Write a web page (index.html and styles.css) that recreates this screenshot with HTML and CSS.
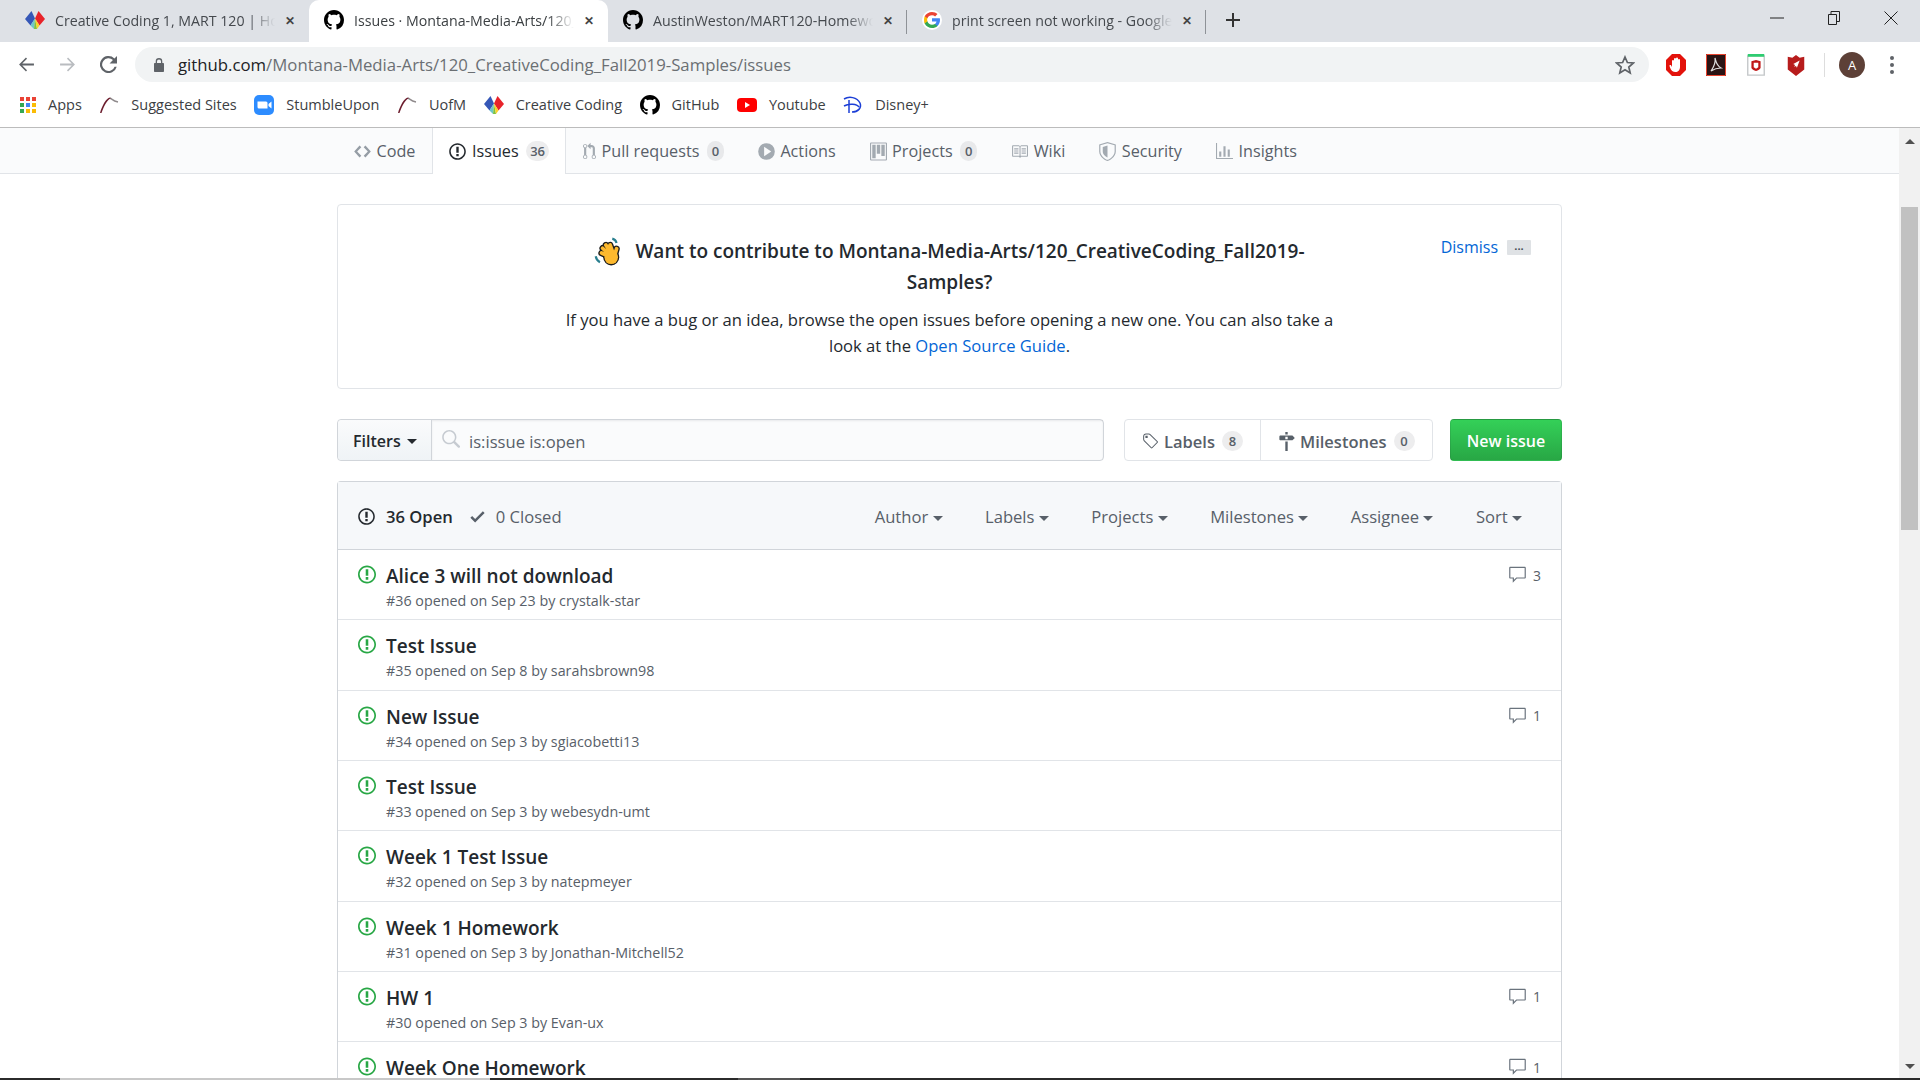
FILE: index.html
```html
<!DOCTYPE html>
<html lang="en">
<head>
<meta charset="UTF-8">
<title>Issues · Montana-Media-Arts/120_CreativeCoding_Fall2019-Samples</title>
<link rel="stylesheet" href="styles.css">
</head>
<body>

<svg class="sprite" xmlns="http://www.w3.org/2000/svg">
  <symbol id="i-issue" viewBox="0 0 14 16"><path d="M7 2.3c3.14 0 5.7 2.56 5.7 5.7s-2.56 5.7-5.7 5.7A5.71 5.71 0 0 1 1.3 8c0-3.14 2.56-5.7 5.7-5.7zM7 1C3.14 1 0 4.14 0 8s3.14 7 7 7 7-3.14 7-7-3.14-7-7-7zm1 3H6v5h2V4zm0 6H6v2h2v-2z"/></symbol>
  <symbol id="i-code" viewBox="0 0 14 16"><path d="M9.5 3L8 4.500 11.500 8 8 11.500 9.500 13 14 8 9.500 3zm-5 0L0 8l4.500 5L6 11.500 2.500 8 6 4.500 4.500 3z"/></symbol>
  <symbol id="i-pull" viewBox="0 0 12 16"><path d="M11 11.28V5c-.03-.78-.34-1.47-.94-2.06C9.46 2.35 8.78 2.03 8 2H7V0L4 3l3 3V4h1c.27.02.48.11.69.31.21.2.3.42.31.69v6.28A1.993 1.993 0 0 0 10 15a1.993 1.993 0 0 0 1-3.72zm-1 2.92c-.66 0-1.2-.55-1.2-1.2 0-.65.55-1.2 1.2-1.2.65 0 1.2.55 1.2 1.2 0 .65-.55 1.2-1.2 1.2zM4 3c0-1.11-.89-2-2-2a1.993 1.993 0 0 0-1 3.72v6.56A1.993 1.993 0 0 0 2 15a1.993 1.993 0 0 0 1-3.72V4.72c.59-.34 1-.98 1-1.72zm-.8 10c0 .66-.55 1.2-1.2 1.2-.65 0-1.2-.55-1.2-1.2 0-.65.55-1.2 1.2-1.2.65 0 1.2.55 1.2 1.2zM2 4.200C1.34 4.200.8 3.650.8 3c0-.65.55-1.2 1.2-1.2.65 0 1.2.55 1.2 1.2 0 .65-.55 1.2-1.2 1.2z"/></symbol>
  <symbol id="i-play" viewBox="0 0 14 16"><path d="M14 8A7 7 0 1 1 0 8a7 7 0 0 1 14 0zM5 12l6-4-6-4v8z"/></symbol>
  <symbol id="i-project" viewBox="0 0 15 16"><path fill-rule="evenodd" d="M10 12h3V2h-3v10zm-4-2h3V2H6v8zm-4 4h3V2H2v12zm-1 1h13V1H1v14zM14 0H1a1 1 0 0 0-1 1v14a1 1 0 0 0 1 1h13a1 1 0 0 0 1-1V1a1 1 0 0 0-1-1z"/></symbol>
  <symbol id="i-book" viewBox="0 0 16 16"><path d="M3 5h4v1H3V5zm0 3h4V7H3v1zm0 2h4V9H3v1zm11-5h-4v1h4V5zm0 2h-4v1h4V7zm0 2h-4v1h4V9zm2-6v9c0 .55-.45 1-1 1H9.500l-1 1-1-1H2c-.55 0-1-.45-1-1V3c0-.55.45-1 1-1h5.500l1 1 1-1H15c.55 0 1 .45 1 1zm-8 .5L7.500 3H2v9h6V3.500zm7-.5H9.500l-.5.5V12h6V3z"/></symbol>
  <symbol id="i-shield" viewBox="0 0 14 16"><path fill-rule="evenodd" d="M0 2l7-2 7 2v6.020C14 12.690 8.310 16 7 16c-1.310 0-7-3.310-7-7.980V2zm1 .75v5.270C1 12 6 15 7 15s6-3 6-6.980V2.750L7 1 1 2.750zM7 3L3 4.200v3.800C3 10.800 6 12.600 7 13V3z"/></symbol>
  <symbol id="i-graph" viewBox="0 0 16 16"><path d="M16 14v1H0V0h1v14h15zM5 13H3V8h2v5zm4 0H7V3h2v10zm4 0h-2V6h2v7z"/></symbol>
  <symbol id="i-tag" viewBox="0 0 15 16"><path d="M7.730 1.730C7.260 1.260 6.620 1 5.960 1H3.500C2.130 1 1 2.130 1 3.500v2.470c0 .66.27 1.300.73 1.770l6.060 6.060c.39.39 1.020.39 1.410 0l4.590-4.590a.996.996 0 0 0 0-1.410L7.730 1.730zM2.380 7.090c-.31-.3-.47-.7-.47-1.130V3.500c0-.88.72-1.590 1.590-1.590h2.470c.42 0 .83.16 1.130.47l6.140 6.130-4.730 4.730-6.130-6.150zM3.010 3h2v2H3V3h.01z"/></symbol>
  <symbol id="i-milestone" viewBox="0 0 14 16"><path d="M8 2H6V0h2v2zm4 5H2c-.55 0-1-.45-1-1V4c0-.55.45-1 1-1h10l2 2-2 2zM8 4H6v2h2V4zM6 16h2V8H6v8z"/></symbol>
  <symbol id="i-check" viewBox="0 0 12 16"><path d="M12 5l-8 8-4-4 1.500-1.500L4 10l6.500-6.500L12 5z"/></symbol>
  <symbol id="i-comment" viewBox="0 0 16 16"><path d="M14 1H2c-.55 0-1 .45-1 1v8c0 .55.45 1 1 1h2v3.500L7.500 11H14c.55 0 1-.45 1-1V2c0-.55-.45-1-1-1zm0 9H7l-2 2v-2H2V2h12v8z"/></symbol>
  <symbol id="i-search" viewBox="0 0 16 16"><path d="M15.700 13.300l-3.810-3.830A5.930 5.930 0 0 0 13 6c0-3.310-2.690-6-6-6S1 2.690 1 6s2.690 6 6 6c1.300 0 2.480-.41 3.470-1.110l3.830 3.810c.19.2.45.3.7.3.25 0 .52-.09.7-.3a.996.996 0 0 0 0-1.410v.01zM7 10.700c-2.590 0-4.700-2.110-4.700-4.700 0-2.590 2.110-4.700 4.700-4.700 2.590 0 4.700 2.110 4.700 4.700 0 2.590-2.110 4.700-4.700 4.700z"/></symbol>
  <symbol id="i-github" viewBox="0 0 16 16"><path d="M8 0C3.580 0 0 3.580 0 8c0 3.540 2.290 6.530 5.470 7.590.4.07.55-.17.55-.38 0-.19-.01-.82-.01-1.490-2.010.37-2.530-.49-2.690-.94-.09-.23-.48-.94-.82-1.130-.28-.15-.68-.52-.01-.53.63-.01 1.080.58 1.230.82.72 1.210 1.870.87 2.330.66.07-.52.28-.87.51-1.070-1.780-.2-3.640-.89-3.640-3.950 0-.87.31-1.590.82-2.150-.08-.2-.36-1.020.08-2.120 0 0 .67-.21 2.200.82.64-.18 1.320-.27 2-.27.68 0 1.360.09 2 .27 1.530-1.040 2.200-.82 2.200-.82.44 1.100.16 1.920.08 2.120.51.56.82 1.270.82 2.150 0 3.070-1.870 3.750-3.650 3.950.29.25.54.73.54 1.480 0 1.070-.01 1.930-.01 2.200 0 .21.15.46.55.38A8.013 8.013 0 0 0 16 8c0-4.420-3.580-8-8-8z"/></symbol>
  <symbol id="i-diamonds" viewBox="0 0 20 20">
    <path fill="#3557b7" d="M6.500 1L0 9l5.500 6.500L10 8.500z"/>
    <path fill="#e8232a" d="M13.500 1L20 9l-5.500 6.500L10 8.500z"/>
    <path fill="#6fc7c9" d="M10 8.500L5.500 15.500 9 19z"/>
    <path fill="#7cc242" d="M10 8.500L9 19h3z"/>
    <path fill="#fbd428" d="M10 8.500L14.500 15.500 12 19z"/>
  </symbol>
  <symbol id="i-peak" viewBox="0 0 20 20">
    <path fill="none" stroke="#8f8a8c" stroke-width="1.400" d="M11 3c2 1 3 3 8 4"/>
    <path fill="#6d1f2f" d="M1 18C3 11 7 3 11 2.500l.5 1C8 5 5 11 2.500 18z"/>
  </symbol>
</svg>

<div class="tabstrip">
  <div class="tab">
    <svg class="favicon"><use href="#i-diamonds"/></svg>
    <span class="tab-title">Creative Coding 1, MART 120 | Home</span>
    <span class="tab-close">&#10005;</span>
  </div>
  <div class="tab tab-active">
    <svg class="favicon"><use href="#i-github"/></svg>
    <span class="tab-title">Issues · Montana-Media-Arts/120_CreativeCoding</span>
    <span class="tab-close">&#10005;</span>
  </div>
  <div class="tab tab-sep">
    <svg class="favicon"><use href="#i-github"/></svg>
    <span class="tab-title">AustinWeston/MART120-Homework</span>
    <span class="tab-close">&#10005;</span>
  </div>
  <div class="tab tab-sep">
    <svg class="favicon" viewBox="0 0 20 20">
      <circle cx="10" cy="10" r="10" fill="#fff"/>
      <path fill="#4285f4" d="M18 10c0-.6-.1-1.100-.2-1.700H10v3.200h4.500c-.2 1-.8 1.900-1.600 2.400v2h2.600c1.600-1.400 2.500-3.500 2.500-5.900z"/>
      <path fill="#34a853" d="M10 18c2.200 0 4-.7 5.500-2.100l-2.600-2c-.7.500-1.700.8-2.900.8-2.100 0-3.900-1.400-4.600-3.400H2.700v2.100C4.100 16.200 6.900 18 10 18z"/>
      <path fill="#fbbc05" d="M5.400 11.300c-.4-1-.4-2 0-3V6.200H2.700c-.9 2.300-.9 5.200 0 7.200z"/>
      <path fill="#ea4335" d="M10 5.300c1.200 0 2.300.4 3.100 1.200l2.400-2.400C14.100 2.800 12.200 2 10 2 6.900 2 4.100 3.800 2.700 6.200l2.700 2.100c.7-1.700 2.500-3 4.600-3z"/>
    </svg>
    <span class="tab-title">print screen not working - Google Search</span>
    <span class="tab-close">&#10005;</span>
  </div>
  <div class="tab-end">
    <svg class="newtab" viewBox="0 0 16 16"><path d="M7 1h2v6h6v2H9v6H7V9H1V7h6z"/></svg>
  </div>
  <div class="winctl">
    <svg viewBox="0 0 14 14"><path d="M0 7h14" stroke="#222" fill="none"/></svg>
    <svg viewBox="0 0 14 14"><path d="M1.500 3.500h8v10h-8zM4 3.500V.5h8.500v10h-3" stroke="#222" fill="none"/></svg>
    <svg viewBox="0 0 14 14"><path d="M.5.5l13 13M13.500.5l-13 13" stroke="#222" fill="none"/></svg>
  </div>
</div>

<div class="toolbar">
  <svg class="nav-btn" viewBox="0 0 16 16"><path d="M15 7H4l4.500-4.500L7.500 1.500 1 8l6.500 6.500 1-1L4 9h11z" fill="#5f6368"/></svg>
  <svg class="nav-btn" viewBox="0 0 16 16"><path d="M1 7h11L7.500 2.500l1-1L15 8l-6.500 6.500-1-1L12 9H1z" fill="#b9bcc0"/></svg>
  <svg class="nav-btn" viewBox="0 0 16 16"><path d="M13.600 2.400A8 8 0 1 0 15.700 10h-2a6 6 0 1 1-1.500-6.200L9 7h7V0z" fill="#5f6368"/></svg>
  <div class="omnibox">
    <svg class="lock" viewBox="0 0 12 14"><path d="M10 5h-.7V3.400a3.300 3.300 0 0 0-6.600 0V5H2c-.6 0-1 .4-1 1v7c0 .6.400 1 1 1h8c.6 0 1-.4 1-1V6c0-.6-.4-1-1-1zM4 5V3.400a2 2 0 0 1 4 0V5z" fill="#5f6368"/></svg>
    <span class="url"><span class="url-host">github.com</span>/Montana-Media-Arts/120_CreativeCoding_Fall2019-Samples/issues</span>
    <svg class="star" viewBox="0 0 20 20"><path d="M10 2l2.400 5.500 6 .5-4.600 4 1.400 5.900L10 14.800l-5.200 3.100 1.400-5.900-4.600-4 6-.5z" fill="none" stroke="#5f6368" stroke-width="1.700"/></svg>
  </div>
  <div class="ext-icons">
    <svg viewBox="0 0 20 22">
      <path d="M6 0h8l6 6v10l-6 6H6l-6-6V6z" fill="#e3120b"/>
      <path d="M6 7a1 1 0 0 1 2 0V5a1 1 0 0 1 2 0v-.500a1 1 0 0 1 2 0V6a1 1 0 0 1 2 0v7c0 3-2 5-4.500 5S5 16.500 4 13.500L3.500 12c-.3-1 1-1.500 1.500-.7L6 13z" fill="#fff"/>
    </svg>
    <svg viewBox="0 0 20 22">
      <path d="M0 0h20v22H0z" fill="#2a1414"/>
      <path d="M.5.5h19v21H.5z" fill="none" stroke="#e8432e"/>
      <path d="M9 4c1 3 1 7 6 10-3 0-7 1-10 3 2-3 5-7 4-13z" fill="none" stroke="#ddd" stroke-width="1.200"/>
    </svg>
    <svg viewBox="0 0 20 24">
      <path d="M1 2h18v21H1z" fill="#fff" stroke="#c4c7c9" stroke-width="1.500"/>
      <path d="M1 0h18v3H1z" fill="#2ecc71"/>
      <path d="M5 8l5-1.500L15 8v7c0 1.500-3 3-5 3.500-2-.5-5-2-5-3.500z" fill="#c01818"/>
      <path d="M7.500 9.500h5v5l-2.500 1.500-2.500-1.500z" fill="#fff"/>
    </svg>
    <svg viewBox="0 0 20 24">
      <path d="M1 3l5 1 4-3 4 3 5-1v14l-9 7-9-7z" fill="#b71c1c"/>
      <path d="M14 7L7 11l2 1 -1 2 2-1 1 2z" fill="#fff"/>
    </svg>
    <span class="ext-sep"></span>
    <span class="avatar">A</span>
    <span class="kebab"><i></i><i></i><i></i></span>
  </div>
</div>

<div class="bookmarks">
  <div class="bm">
    <span class="apps"><i class="c1"></i><i class="c1"></i><i class="c1"></i><i class="c3"></i><i class="c4"></i><i class="c2"></i><i class="c3"></i><i class="c2"></i><i class="c2"></i></span>
    Apps
  </div>
  <div class="bm"><svg class="favicon"><use href="#i-peak"/></svg>Suggested Sites</div>
  <div class="bm">
    <svg class="favicon" viewBox="0 0 20 20"><rect width="20" height="20" rx="5" fill="#2d8cff"/><path d="M3.500 6.500h8.500a1.500 1.500 0 0 1 1.500 1.500v5.500H5a1.500 1.500 0 0 1-1.500-1.500zM14.500 9l3-2.500v7l-3-2.500z" fill="#fff"/></svg>
    StumbleUpon
  </div>
  <div class="bm"><svg class="favicon"><use href="#i-peak"/></svg>UofM</div>
  <div class="bm"><svg class="favicon"><use href="#i-diamonds"/></svg>Creative Coding</div>
  <div class="bm"><svg class="favicon"><use href="#i-github"/></svg>GitHub</div>
  <div class="bm">
    <svg class="favicon" viewBox="0 0 20 20"><rect y="3" width="20" height="14" rx="4" fill="#f00"/><path d="M8 7l5 3-5 3z" fill="#fff"/></svg>
    Youtube
  </div>
  <div class="bm">
    <svg class="favicon" viewBox="0 0 20 20"><path d="M1 4c5-3 13-2 16 4 2 5-2 9-8 9M6 5v13M1 11c5-3 13-2 15 1" fill="none" stroke="#1c3fd6" stroke-width="1.500"/></svg>
    Disney+
  </div>
</div>

<div class="viewport">
  <div class="page">
    <nav class="reponav">
      <a class="navitem"><svg class="oct oct-code"><use href="#i-code"/></svg>Code</a>
      <a class="navitem navitem-on"><svg class="oct oct-dark"><use href="#i-issue"/></svg>Issues <span class="counter">36</span></a>
      <a class="navitem"><svg class="oct oct-pull"><use href="#i-pull"/></svg>Pull requests <span class="counter">0</span></a>
      <a class="navitem"><svg class="oct"><use href="#i-play"/></svg>Actions</a>
      <a class="navitem"><svg class="oct"><use href="#i-project"/></svg>Projects <span class="counter">0</span></a>
      <a class="navitem"><svg class="oct"><use href="#i-book"/></svg>Wiki</a>
      <a class="navitem"><svg class="oct"><use href="#i-shield"/></svg>Security</a>
      <a class="navitem"><svg class="oct"><use href="#i-graph"/></svg>Insights</a>
    </nav>

    <div class="container">
      <div class="banner">
        <div class="banner-dismiss">
          <a class="link">Dismiss</a>
          <span class="ellipsis">...</span>
        </div>
        <h3 class="banner-title">
          <svg class="wave" viewBox="0 0 26 28">
            <path d="M17 1.500c2 .5 3.500 2 4 4M1.500 18c.5 2.500 2 4.500 4 5.500" fill="none" stroke="#2a7f8f" stroke-width="2"/>
            <g fill="none" stroke="#1c1c1c" stroke-width="6" stroke-linecap="round">
              <path d="M16 19L7 15M16 18L8 10.500M17 17L11 7.500M18 16L15 7.500M19 18L21 11"/>
            </g>
            <circle cx="16" cy="19" r="7.500" fill="#1c1c1c"/>
            <g fill="none" stroke="#fdb92e" stroke-width="3.500" stroke-linecap="round">
              <path d="M16 19L7 15M16 18L8 10.500M17 17L11 7.500M18 16L15 7.500M19 18L21 11"/>
            </g>
            <circle cx="16" cy="19" r="6.300" fill="#fdb92e"/>
          </svg>
          Want to contribute to Montana-Media-Arts/120_CreativeCoding_Fall2019-Samples?
        </h3>
        <p class="banner-text">If you have a bug or an idea, browse the open issues before opening a new one. You can also take a look at the <a class="link">Open Source Guide</a>.</p>
      </div>

      <div class="filterbar">
        <div class="searchgroup">
          <div class="filters-btn">Filters <span class="caret"></span></div>
          <div class="searchbox">
            <svg class="oct oct-search"><use href="#i-search"/></svg>
            <span>is:issue is:open</span>
          </div>
        </div>
        <div class="labelgroup">
          <a class="labelitem"><svg class="oct oct-tag"><use href="#i-tag"/></svg>Labels <span class="counter">8</span></a>
          <a class="labelitem"><svg class="oct oct-mile"><use href="#i-milestone"/></svg>Milestones <span class="counter">0</span></a>
        </div>
        <a class="btn-new">New issue</a>
      </div>

      <div class="issues">
        <div class="issues-head">
          <div class="states">
            <span class="state state-on"><svg class="oct oct-dark"><use href="#i-issue"/></svg>36 Open</span>
            <span class="state"><svg class="oct oct-check"><use href="#i-check"/></svg>0 Closed</span>
          </div>
          <div class="sorts">
            <span>Author <span class="caret"></span></span>
            <span>Labels <span class="caret"></span></span>
            <span>Projects <span class="caret"></span></span>
            <span>Milestones <span class="caret"></span></span>
            <span>Assignee <span class="caret"></span></span>
            <span>Sort <span class="caret"></span></span>
          </div>
        </div>

        <div class="issue">
          <svg class="oct oct-open"><use href="#i-issue"/></svg>
          <div class="issue-main"><a class="issue-title">Alice 3 will not download</a><div class="issue-meta">#36 opened on Sep 23 by crystalk-star</div></div>
          <span class="issue-comments"><svg class="oct oct-comment"><use href="#i-comment"/></svg>3</span>
        </div>
        <div class="issue">
          <svg class="oct oct-open"><use href="#i-issue"/></svg>
          <div class="issue-main"><a class="issue-title">Test Issue</a><div class="issue-meta">#35 opened on Sep 8 by sarahsbrown98</div></div>
        </div>
        <div class="issue">
          <svg class="oct oct-open"><use href="#i-issue"/></svg>
          <div class="issue-main"><a class="issue-title">New Issue</a><div class="issue-meta">#34 opened on Sep 3 by sgiacobetti13</div></div>
          <span class="issue-comments"><svg class="oct oct-comment"><use href="#i-comment"/></svg>1</span>
        </div>
        <div class="issue">
          <svg class="oct oct-open"><use href="#i-issue"/></svg>
          <div class="issue-main"><a class="issue-title">Test Issue</a><div class="issue-meta">#33 opened on Sep 3 by webesydn-umt</div></div>
        </div>
        <div class="issue">
          <svg class="oct oct-open"><use href="#i-issue"/></svg>
          <div class="issue-main"><a class="issue-title">Week 1 Test Issue</a><div class="issue-meta">#32 opened on Sep 3 by natepmeyer</div></div>
        </div>
        <div class="issue">
          <svg class="oct oct-open"><use href="#i-issue"/></svg>
          <div class="issue-main"><a class="issue-title">Week 1 Homework</a><div class="issue-meta">#31 opened on Sep 3 by Jonathan-Mitchell52</div></div>
        </div>
        <div class="issue">
          <svg class="oct oct-open"><use href="#i-issue"/></svg>
          <div class="issue-main"><a class="issue-title">HW 1</a><div class="issue-meta">#30 opened on Sep 3 by Evan-ux</div></div>
          <span class="issue-comments"><svg class="oct oct-comment"><use href="#i-comment"/></svg>1</span>
        </div>
        <div class="issue">
          <svg class="oct oct-open"><use href="#i-issue"/></svg>
          <div class="issue-main"><a class="issue-title">Week One Homework</a></div>
          <span class="issue-comments"><svg class="oct oct-comment"><use href="#i-comment"/></svg>1</span>
        </div>
      </div>
    </div>
  </div>

  <div class="scrollbar">
    <span class="sb-arrow sb-up"></span>
    <div class="sb-thumb"></div>
    <span class="sb-arrow sb-down"></span>
  </div>
</div>

<div class="taskbar"><i class="tb-dark tb-a"></i><i class="tb-light tb-b"></i><i class="tb-dark tb-c"></i><i class="tb-mid tb-d"></i><i class="tb-dark tb-e"></i></div>

</body>
</html>
```

FILE: styles.css
```css
html, body { margin: 0; padding: 0; height: 100%; overflow: hidden; }
body {
  display: flex; flex-direction: column;
  height: 1080px;
  font-family: "Open Sans", "Noto Sans", sans-serif;
  color: #24292e;
  background: #fff;
}
a { text-decoration: none; }
.sprite { display: none; }
.favicon { width: 20px; height: 20px; flex: none; }

/* browser chrome */
.tabstrip {
  display: flex; align-items: stretch;
  height: 42px; padding-left: 10px;
  background: #dee1e6;
  flex: none;
}
.tab {
  width: 299px; box-sizing: border-box;
  display: flex; align-items: center; gap: 10px;
  padding: 0 14px 2px 15px;
  position: relative;
}
.tab-active { background: #fff; border-radius: 10px 10px 0 0; }
.tab-sep::after {
  content: ""; position: absolute;
  right: 0; top: 10px; bottom: 8px;
  width: 1px; background: #8e9297;
}
.tab-title {
  flex: 1; min-width: 0;
  font-size: 14.2px; color: #45494e;
  white-space: nowrap; overflow: hidden;
  -webkit-mask-image: linear-gradient(to right, #000 88%, transparent);
  mask-image: linear-gradient(to right, #000 88%, transparent);
}
.tab-active .tab-title { color: #3c4043; }
.tab-close { font-size: 12px; font-weight: 700; color: #444; }
.tab-end { display: flex; align-items: center; padding-left: 19px; padding-bottom: 2px; }
.newtab { width: 16px; height: 16px; fill: #333; }
.winctl {
  margin-left: auto;
  display: flex; align-items: center; gap: 43px;
  padding-right: 22px; padding-bottom: 6px;
}
.winctl svg { width: 14px; height: 14px; }

.toolbar {
  display: flex; align-items: center;
  height: 45px; flex: none;
  padding-left: 18px;
  background: #fff;
}
.nav-btn { width: 17px; height: 17px; margin-right: 24px; flex: none; }
.omnibox {
  display: flex; align-items: center;
  width: 1514px; height: 35px; margin-left: -6px;
  background: #f1f3f4; border-radius: 18px;
  box-sizing: border-box; padding: 0 14px 0 18px;
}
.lock { width: 12px; height: 14px; margin-right: 13px; flex: none; }
.url { flex: 1; font-size: 16.75px; color: #6b6f73; }
.url-host { color: #202124; }
.star { width: 20px; height: 20px; }
.ext-icons {
  display: flex; align-items: center; gap: 20px;
  margin-left: 17px;
}
.ext-icons svg { width: 20px; height: 22px; flex: none; }
.ext-sep { width: 1px; height: 24px; background: #ddd; margin: 0 -6px 0 -2px; }
.avatar {
  width: 26px; height: 26px; border-radius: 50%;
  background: #5d4037; color: #fff;
  font-size: 13px; line-height: 26px; text-align: center;
}
.kebab { display: flex; flex-direction: column; gap: 3px; margin-left: 5px; }
.kebab i { width: 4px; height: 4px; border-radius: 50%; background: #5f6368; }

.bookmarks {
  display: flex; align-items: center; gap: 17.5px;
  height: 35px; padding: 0 0 5px 20px; flex: none;
  border-bottom: 1px solid #bcbcbc;
  font-size: 14.5px; color: #3c4043;
}
.bm { display: flex; align-items: center; gap: 12px; white-space: nowrap; }
.apps { display: grid; grid-template-columns: repeat(3, 4px); gap: 2px; }
.apps i { width: 4px; height: 4px; }
.c1 { background: #ea4335; }
.c2 { background: #fbbc05; }
.c3 { background: #34a853; }
.c4 { background: #4285f4; }

/* page */
.viewport { flex: 1; min-height: 0; display: flex; }
.page { flex: 1; min-width: 0; overflow: hidden; }

.reponav {
  display: flex; align-items: flex-end;
  height: 45px; padding-left: 337px;
  background: #fafbfc;
  border-bottom: 1px solid #e1e4e8;
}
.navitem {
  display: flex; align-items: center; gap: 5.5px;
  height: 46px; margin-bottom: -1px;
  box-sizing: border-box;
  padding: 0 16px;
  font-size: 16.2px; color: #586069;
  border: 1px solid transparent; border-width: 0 1px;
  white-space: nowrap;
}
.navitem-on { background: #fff; color: #24292e; border-color: #e1e4e8; }
.oct { width: 17px; height: 19px; fill: #a3aab1; flex: none; }
.oct-dark { fill: #24292e; }
.oct-code { fill: #959da5; }
.oct-pull { width: 13px; }
.counter {
  display: inline-block;
  min-width: 9px; padding: 1px 4px;
  margin-left: 2px;
  font-size: 13px; line-height: 18px;
  font-weight: 600; color: #586069;
  background: rgba(27, 31, 35, .08);
  border-radius: 12px;
  text-align: center;
}

.container { width: 1225px; margin: 30px auto 0; }

.banner {
  position: relative;
  height: 185px; box-sizing: border-box;
  padding-top: 31px;
  border: 1px solid #e1e4e8; border-radius: 4px;
  text-align: center;
}
.banner-dismiss {
  position: absolute; top: 31px; right: 30px;
  display: flex; align-items: center; gap: 9px;
  font-size: 16px;
}
.link { color: #0366d6; }
.ellipsis {
  width: 24px; height: 15px;
  background: #dfe2e5; border-radius: 1px;
  font-size: 11px; font-weight: 700; line-height: 11px; color: #444d56;
}
.banner-title {
  width: 760px; margin: 0 auto;
  font-size: 19px; font-weight: 600; line-height: 31px;
}
.wave { width: 28px; height: 30px; vertical-align: -9px; margin-right: 8px; }
.banner-text {
  width: 790px; margin: 9px auto 0;
  font-size: 16.6px; line-height: 26px; color: #24292e;
}

.filterbar { display: flex; align-items: stretch; height: 42px; margin-top: 30px; }
.searchgroup {
  display: flex; width: 767px;
  border: 1px solid #d1d5da; border-radius: 4px;
  box-sizing: border-box;
  background: #fafbfc;
}
.filters-btn {
  display: flex; align-items: center; gap: 6px;
  width: 94px; box-sizing: border-box; padding: 2px 0 0 15px;
  font-size: 16px; font-weight: 600; color: #24292e;
  background: linear-gradient(#fafbfc, #eff3f6);
  border-right: 1px solid #d1d5da;
  border-radius: 4px 0 0 4px;
}
.caret {
  display: inline-block;
  width: 0; height: 0;
  border: 5px solid transparent; border-top-color: currentColor;
  border-bottom-width: 0;
  vertical-align: middle;
}
.searchbox {
  flex: 1;
  display: flex; align-items: center; gap: 9px;
  padding: 2px 0 0 9px;
  font-size: 16.6px; color: #586069;
  box-shadow: inset 0 1px 2px rgba(27, 31, 35, .075);
}
.oct-search { width: 19px; height: 19px; fill: #c6cbd1; margin-top: -4px; }
.labelgroup {
  display: flex; margin-left: 20px;
  border: 1px solid #e1e4e8; border-radius: 4px;
}
.labelitem {
  display: flex; align-items: center; gap: 5px;
  padding: 2px 17px 0;
  font-size: 16.5px; font-weight: 600; color: #586069;
}
.labelitem .counter { padding: 1px 6px; }
.labelitem + .labelitem { border-left: 1px solid #e1e4e8; }
.oct-tag { fill: #586069; }
.oct-mile { fill: #586069; }
.btn-new {
  display: flex; align-items: center; justify-content: center;
  width: 112px; margin-left: auto; padding-top: 2px;
  font-size: 16px; font-weight: 600; color: #fff;
  background: linear-gradient(#34d058, #28a745);
  border: 1px solid rgba(27, 31, 35, .1);
  box-sizing: border-box;
  border-radius: 4px;
}

.issues {
  margin-top: 20px;
  border: 1px solid #d1d5da; border-bottom: 0;
  border-radius: 4px 4px 0 0;
}
.issues-head {
  display: flex; align-items: center; justify-content: space-between;
  height: 65px;
  padding: 2px 39px 0 20px;
  background: #f6f8fa;
  border-bottom: 1px solid #d1d5da;
  font-size: 16.6px; color: #586069;
}
.states { display: flex; gap: 17px; }
.state { display: flex; align-items: center; gap: 11px; }
.state-on { font-weight: 600; color: #24292e; }
.oct-check { width: 15px; fill: #586069; }
.sorts { display: flex; gap: 42.5px; }

.issue {
  display: flex; align-items: flex-start;
  height: 70.33px; box-sizing: border-box;
  padding: 0 20px;
  border-bottom: 1px solid #e1e4e8;
}
.oct-open { fill: #28a745; margin-top: 14px; width: 18px; height: 21px; }
.issue-main { flex: 1; margin-left: 10px; padding-top: 13px; }
.issue-title { display: block; font-size: 19px; font-weight: 600; line-height: 26px; color: #24292e; }
.issue-meta { font-size: 14.3px; line-height: 19px; color: #586069; margin-top: 2px; }
.issue-comments {
  display: flex; align-items: center; gap: 6px;
  padding-top: 15px;
  font-size: 14px; color: #586069;
}
.oct-comment { width: 19px; height: 20px; fill: #6a737d; }

.scrollbar {
  width: 21px; flex: none;
  display: flex; flex-direction: column; align-items: center;
  background: #f1f1f1;
  position: relative;
}
.sb-thumb { width: 17px; height: 323px; margin-top: 79px; background: #c1c1c1; }
.sb-arrow {
  position: absolute; left: 6px;
  border: 5px solid transparent; border-top: 0; border-bottom: 5px solid #505050;
}
.sb-up { top: 11px; }
.sb-down { bottom: 11px; transform: rotate(180deg); }

.taskbar {
  position: fixed; left: 0; right: 0; bottom: 0;
  display: flex;
  height: 2px;
}
.taskbar i { display: block; height: 2px; }
.tb-dark { background: #2b2b2b; }
.tb-light { background: #c8c8c8; }
.tb-mid { background: #555; }
.tb-a { width: 60px; }
.tb-b { width: 430px; }
.tb-c { width: 248px; }
.tb-d { width: 62px; }
.tb-e { flex: 1; }
```
